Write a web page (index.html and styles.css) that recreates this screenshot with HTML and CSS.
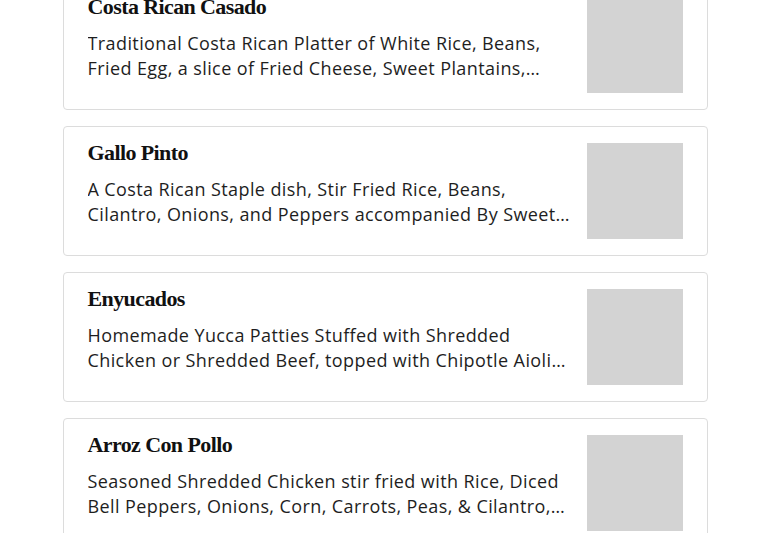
FILE: index.html
```html
<!DOCTYPE html>
<html>
<head>
<meta charset="utf-8">
<link rel="stylesheet" href="styles.css">
</head>
<body>
<main class="menu">
  <article class="item">
    <div class="info">
      <h3 class="name">Costa Rican Casado</h3>
      <p class="desc">Traditional Costa Rican Platter of White Rice, Beans, Fried Egg, a slice of Fried Cheese, Sweet Plantains, Salad and your choice of protein.</p>
    </div>
    <div class="thumb"></div>
  </article>
  <article class="item">
    <div class="info">
      <h3 class="name">Gallo Pinto</h3>
      <p class="desc">A Costa Rican Staple dish, Stir Fried Rice, Beans, Cilantro, Onions, and Peppers accompanied By Sweet Plantains and Fried Egg.</p>
    </div>
    <div class="thumb"></div>
  </article>
  <article class="item">
    <div class="info">
      <h3 class="name">Enyucados</h3>
      <p class="desc">Homemade Yucca Patties Stuffed with Shredded Chicken or Shredded Beef, topped with Chipotle Aioli, served with salad.</p>
    </div>
    <div class="thumb"></div>
  </article>
  <article class="item">
    <div class="info">
      <h3 class="name">Arroz Con Pollo</h3>
      <p class="desc">Seasoned Shredded Chicken stir fried with Rice, Diced Bell Peppers, Onions, Corn, Carrots, Peas, &amp; Cilantro, served with salad.</p>
    </div>
    <div class="thumb"></div>
  </article>
</main>
</body>
</html>
```
FILE: styles.css
```css
html, body {
  margin: 0;
  padding: 0;
  background: #fff;
}
.menu {
  max-width: 645px;
  margin: -20px auto 0;
  display: flex;
  flex-direction: column;
  gap: 16px;
}
.item {
  display: flex;
  gap: 16px;
  padding: 16px 24px;
  border: 1px solid #dcdcdc;
  border-radius: 4px;
  background: #fff;
}
.info {
  flex: 1;
  min-width: 0;
}
.name {
  margin: 0;
  font-family: "Liberation Serif", "DejaVu Serif", serif;
  font-weight: bold;
  font-size: 22px;
  line-height: 20px;
  color: #111;
  letter-spacing: -0.6px;
}
.desc {
  margin: 14px 0 0;
  font-family: "Open Sans", sans-serif;
  font-size: 18px;
  line-height: 25px;
  letter-spacing: 0.4px;
  color: #1e1e1e;
  display: -webkit-box;
  -webkit-line-clamp: 2;
  -webkit-box-orient: vertical;
  overflow: hidden;
}
.thumb {
  flex: 0 0 96px;
  width: 96px;
  height: 96px;
  background: #d3d3d3;
}
```
